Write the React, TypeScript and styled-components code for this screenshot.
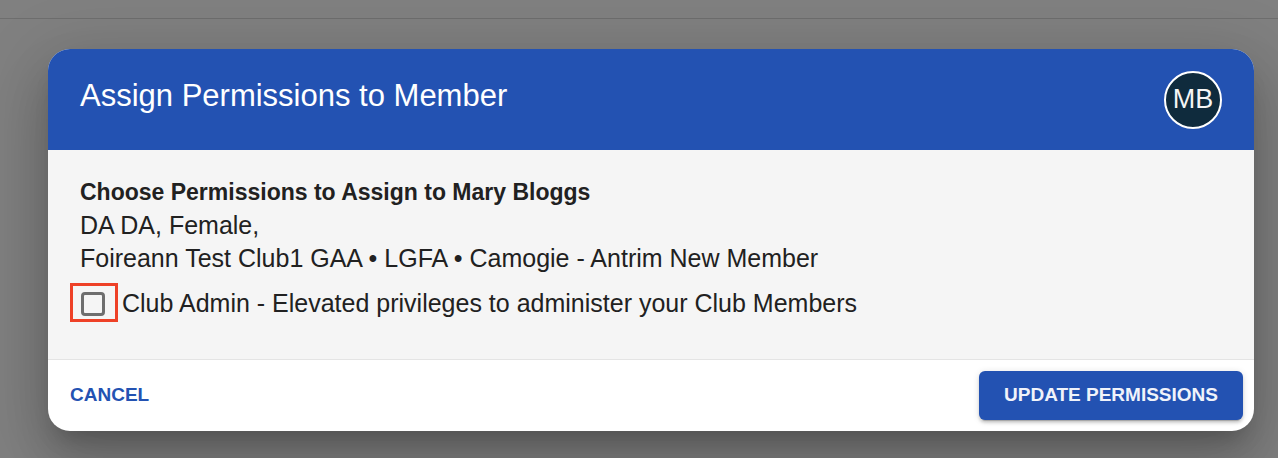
import React, { useState } from "react";
import styled, { createGlobalStyle } from "styled-components";

const GlobalStyle = createGlobalStyle`
  *, *::before, *::after { box-sizing: border-box; }
  body {
    margin: 0;
    background: #808080;
    color: #212121;
    font-family: "Liberation Sans", Helvetica, Arial, sans-serif;
    font-size: 25px;
    line-height: 33px;
    overflow-x: hidden;
  }
`;

const Page = styled.div`
  display: flow-root;
  overflow: hidden;
`;

const TopBar = styled.div`
  height: 19px;
  border-bottom: 1px solid #6e6e6e;
`;

const Dialog = styled.section`
  margin: 30px 24px 27px 48px;
  border-radius: 22px;
  overflow: hidden;
  background: #fff;
  box-shadow:
    0 16px 22px -10px rgba(0, 0, 0, 0.2),
    0 35px 55px 4px rgba(0, 0, 0, 0.14),
    0 13px 67px 12px rgba(0, 0, 0, 0.12);
`;

const Header = styled.header`
  display: flex;
  justify-content: space-between;
  align-items: flex-start;
  padding: 22px 32px 21px;
  background: #2352b2;
  color: #fff;
`;

const Title = styled.h1`
  margin: 0;
  padding-top: 4px;
  font-size: 31px;
  font-weight: 400;
  line-height: 42px;
`;

const Avatar = styled.div`
  display: flex;
  align-items: center;
  justify-content: center;
  width: 58px;
  height: 58px;
  padding-bottom: 2px;
  border: 2px solid #fff;
  border-radius: 50%;
  background: #0f2b3d;
  color: #f5f5f5;
  font-size: 27px;
`;

const Content = styled.div`
  padding: 26px 32px 37px;
  background: #f5f5f5;
`;

const Heading = styled.h2`
  margin: 0;
  font-size: 23px;
  line-height: 33px;
`;

const Line = styled.p`
  margin: 0;
`;

const Permission = styled.div`
  display: flex;
  align-items: center;
  gap: 4px;
  margin: 8px 0 0 -10px;
`;

const PermissionLabel = styled.label`
  padding-top: 2px;
`;

const Highlight = styled.span`
  display: flex;
  align-items: center;
  flex-shrink: 0;
  width: 48px;
  height: 39px;
  padding: 2px 0 0 8px;
  border: 3px solid #ee4127;
`;

const Checkbox = styled.input`
  appearance: none;
  width: 24px;
  height: 24px;
  margin: 0;
  border: 3px solid #6e6e6e;
  border-radius: 4px;
  background: transparent;
  cursor: pointer;

  &:checked {
    border-color: #2352b2;
    background: #2352b2;
  }
`;

const Footer = styled.footer`
  display: flex;
  justify-content: space-between;
  align-items: center;
  padding: 11px;
  border-top: 1px solid #e4e4e4;
`;

const Button = styled.button<{ $primary?: boolean }>`
  height: 49px;
  padding: 0 ${(p) => (p.$primary ? 25 : 11)}px 2px;
  border: 0;
  border-radius: 6px;
  background: ${(p) => (p.$primary ? "#2352b2" : "transparent")};
  color: ${(p) => (p.$primary ? "#f0f3fa" : "#2352b2")};
  box-shadow: ${(p) =>
    p.$primary
      ? "0 4px 1px -3px rgba(0,0,0,.2), 0 3px 3px rgba(0,0,0,.14), 0 1px 7px rgba(0,0,0,.12)"
      : "none"};
  font: 700 19px/33px "Liberation Sans", Helvetica, Arial, sans-serif;
  text-transform: uppercase;
  cursor: pointer;
`;

export default function App() {
  const [clubAdmin, setClubAdmin] = useState(false);
  return (
    <Page>
      <GlobalStyle />
      <TopBar />
      <Dialog role="dialog" aria-labelledby="dialog-title">
        <Header>
          <Title id="dialog-title">Assign Permissions to Member</Title>
          <Avatar>MB</Avatar>
        </Header>
        <Content>
          <Heading>Choose Permissions to Assign to Mary Bloggs</Heading>
          <Line>DA DA, Female,</Line>
          <Line>Foireann Test Club1 GAA • LGFA • Camogie - Antrim New Member</Line>
          <Permission>
            <Highlight>
              <Checkbox
                id="club-admin"
                type="checkbox"
                checked={clubAdmin}
                onChange={(e) => setClubAdmin(e.target.checked)}
              />
            </Highlight>
            <PermissionLabel htmlFor="club-admin">
              Club Admin - Elevated privileges to administer your Club Members
            </PermissionLabel>
          </Permission>
        </Content>
        <Footer>
          <Button type="button">Cancel</Button>
          <Button type="button" $primary>Update Permissions</Button>
        </Footer>
      </Dialog>
    </Page>
  );
}
